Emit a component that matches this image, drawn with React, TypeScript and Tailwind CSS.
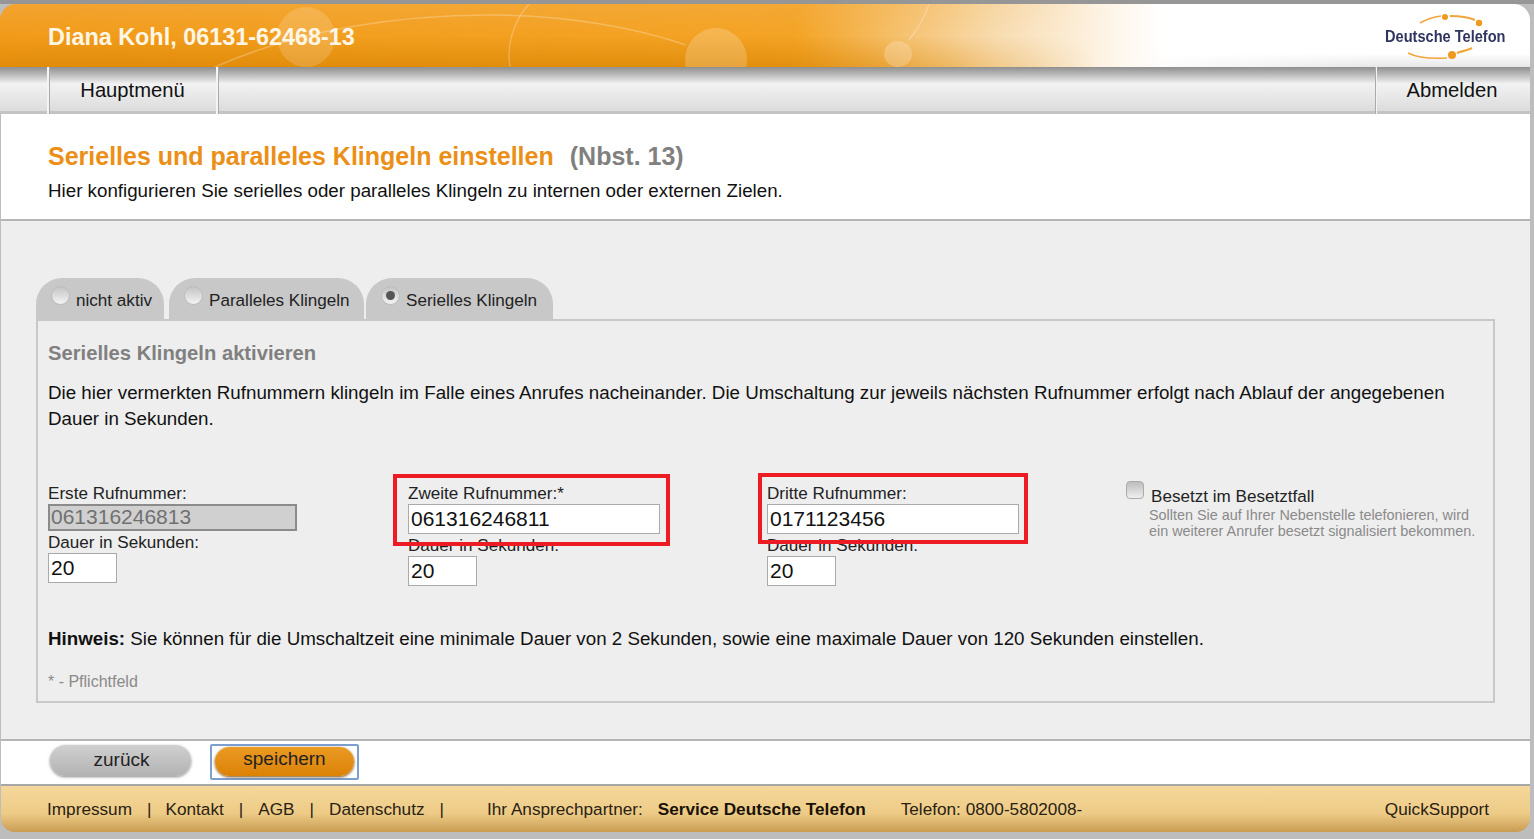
export default function App() {
  const Radio = ({ on }: { on?: boolean }) => (
    <span className="block w-[19px] h-[19px] rounded-full bg-gradient-to-b from-[#c4c4c4] to-[#f4f4f4] border border-[#bdbdbd] flex items-center justify-center shrink-0">
      {on && <span className="block w-[9px] h-[9px] rounded-full bg-[#555]" />}
    </span>
  );
  const Tab = ({ label, on, w, ml }: { label: string; on?: boolean; w: string; ml: string }) => (
    <div className={`${w} ${ml} h-[42px] bg-[#c8c8c8] rounded-t-[26px] flex items-start pl-[15px] pt-[8px] text-[17.1px] text-[#222]`}>
      <Radio on={on} />
      <span className="ml-[6px] mt-[5px] leading-[20px] whitespace-nowrap">{label}</span>
    </div>
  );
  const Field = ({ label, value, dur, w, disabled }: { label: string; value: string; dur: string; w: string; disabled?: boolean }) => (
    <div className={`${w} shrink-0`}>
      <div className="text-[17.1px] leading-[20px] text-[#222]">{label}</div>
      <input
        readOnly
        value={value}
        className={
          disabled
            ? "block w-[249px] h-[27px] bg-[#d0d0d0] border-2 border-[#8b8b8b] px-[1px] pb-[2px] text-[21px] text-[#707070] outline-none"
            : "block w-[252px] h-[30px] bg-white border border-[#aaa] px-[2px] text-[21px] text-[#111] outline-none"
        }
      />
      <div className={`text-[17.1px] leading-[20px] text-[#222] ${dur}`}>Dauer in Sekunden:</div>
      <input readOnly value="20" className="block w-[69px] h-[30px] bg-white border border-[#aaa] px-[2px] text-[21px] text-[#111] outline-none" />
    </div>
  );
  const Sep = () => <span className="ml-[15px]">|</span>;
  return (
    <div className="w-[1534px] h-[839px] bg-[#bdbdbd] overflow-hidden relative text-[#111]" style={{ fontFamily: '"Liberation Sans", Arial, sans-serif' }}>
      <div className="h-[4px] bg-[#969696]" />
      {/* header */}
      <header className="h-[63px] w-[1530px] rounded-t-[16px] relative overflow-hidden bg-[linear-gradient(to_right,#f29b1a_0%,#f4a425_52%,#f8dcb0_65%,#fdf3e4_72%,#ffffff_76%)]">
        <div className="absolute inset-0 bg-gradient-to-b from-[#f3b150]/40 via-transparent to-[#d98503]/70 [mask-image:linear-gradient(to_right,black_50%,transparent_72%)]" />
        <div className="absolute right-0 bottom-0 w-[400px] h-[14px] bg-gradient-to-b from-transparent to-[#d8d8d8]/60 [mask-image:linear-gradient(to_right,transparent,black_60%)]" />
        <svg className="absolute inset-0" width="1530" height="63" viewBox="0 0 1530 63" fill="none">
          <ellipse cx="306" cy="33" rx="29" ry="30" fill="#fff" fillOpacity="0.16" />
          <ellipse cx="716" cy="56" rx="31" ry="32" fill="#fff" fillOpacity="0.2" />
          <ellipse cx="898" cy="50" rx="14" ry="13" fill="#fff" fillOpacity="0.22" />
          <path d="M215 63 C300 25 400 11 490 11 C570 11 640 25 686 41" stroke="#fff" strokeOpacity="0.25" strokeWidth="1.5" />
          <path d="M510 63 C506 40 515 15 529 0" stroke="#fff" strokeOpacity="0.28" strokeWidth="1.2" />
          <path d="M909 36 C918 25 925 12 929 0" stroke="#fff" strokeOpacity="0.28" strokeWidth="1.2" />
          <path d="M1420 19 C1427 15 1434 13 1441 12" stroke="#f0a63a" strokeWidth="1.5" />
          <path d="M1450 12 C1460 12 1468 13 1475 16" stroke="#f0a63a" strokeWidth="2" />
          <circle cx="1445" cy="13" r="3" fill="#ef9a1e" />
          <circle cx="1479" cy="19" r="3.2" fill="#ef9a1e" />
          <path d="M1408 49 C1418 54 1432 55 1447 54" stroke="#f0a63a" strokeWidth="1.5" />
          <circle cx="1452" cy="51" r="4" fill="#ef9a1e" />
          <path d="M1457 49 C1463 47 1468 46 1472 44" stroke="#f0a63a" strokeWidth="2.2" />
        </svg>
        <div className="absolute left-[48px] top-[20px] text-[23.4px] leading-[26px] font-bold text-[#fff6e6]">Diana Kohl, 06131-62468-13</div>
        <div className="absolute left-[1385px] top-[24px] text-[17px] leading-[18px] font-bold text-[#2f3460] scale-x-[0.858] origin-left whitespace-nowrap">Deutsche Telefon</div>
      </header>
      {/* nav */}
      <nav className="h-[47px] w-[1530px] flex bg-gradient-to-b from-[#8f8f8f] via-[#f2f2f2] via-[38%] to-[#dcdcdc] border-b-[3px] border-[#c4c4c4] text-[20.2px]">
        <div className="w-[47px]" />
        <div className="w-[171px] h-[47px] border-x-2 border-x-[#f4f4f4] shadow-[inset_1px_0_0_#aaa,1px_0_0_#aaa] flex items-center justify-center">Hauptmenü</div>
        <div className="flex-1" />
        <div className="w-[153px] mr-[1px] h-[47px] border-l border-l-[#f4f4f4] shadow-[-1px_0_0_#aaa] flex items-center justify-center pr-[2px]">Abmelden</div>
      </nav>
      {/* title */}
      <section className="h-[107px] w-[1529px] ml-[1px] bg-white border-b-2 border-[#b5b5b5] pl-[47px] pt-[27px]">
        <h1 className="text-[25px] leading-[30px] font-bold text-[#ec8f17]">
          Serielles und paralleles Klingeln einstellen<span className="text-[#808080] ml-[16px]">(Nbst. 13)</span>
        </h1>
        <p className="mt-[8px] text-[18.75px] leading-[24px] text-[#111]">Hier konfigurieren Sie serielles oder paralleles Klingeln zu internen oder externen Zielen.</p>
      </section>
      {/* main */}
      <main className="h-[520px] w-[1529px] ml-[1px] bg-[#eeeeee] pl-[35px] pt-[57px] border-b-2 border-[#b5b5b5]">
        <div className="flex">
          <Tab label="nicht aktiv" w="w-[128px]" ml="" />
          <Tab label="Paralleles Klingeln" w="w-[195px]" ml="ml-[5px]" />
          <Tab label="Serielles Klingeln" on w="w-[187px]" ml="ml-[2px]" />
        </div>
        <div className="w-[1459px] h-[384px] -mt-[1px] border-2 border-[#c8c8c8] pl-[10px] pt-[19px] relative">
          <h2 className="text-[20.2px] leading-[26px] font-bold text-[#808080]">Serielles Klingeln aktivieren</h2>
          <p className="mt-[14px] text-[18.75px] leading-[26px] w-[1420px] text-[#111]">Die hier vermerkten Rufnummern klingeln im Falle eines Anrufes nacheinander. Die Umschaltung zur jeweils nächsten Rufnummer erfolgt nach Ablauf der angegebenen Dauer in Sekunden.</p>
          <div className="flex mt-[52px] h-[115px]">
            <Field label="Erste Rufnummer:" value="061316246813" w="w-[360px]" dur="mt-[2px]" disabled />
            <Field label="Zweite Rufnummer:*" value="061316246811" w="w-[359px]" dur="mt-[2px]" />
            <Field label="Dritte Rufnummer:" value="0171123456" w="w-[359px]" dur="mt-[2px]" />
            <div className="flex -mt-[3px] items-start">
              <span className="block w-[18px] h-[18px] rounded-[4px] border border-[#aaa] bg-gradient-to-b from-[#bdbdbd] to-[#efefef] shrink-0" />
              <div className="ml-[7px] mt-[6px]">
                <div className="text-[17.1px] leading-[20px] text-[#222]">Besetzt im Besetztfall</div>
                <div className="text-[14.4px] leading-[16px] text-[#8a8a8a] whitespace-nowrap -ml-[2px]">Sollten Sie auf Ihrer Nebenstelle telefonieren, wird<br />ein weiterer Anrufer besetzt signalisiert bekommen.</div>
              </div>
            </div>
          </div>
          <p className="mt-[28px] text-[18.75px] leading-[24px] text-[#111]"><b>Hinweis:</b> Sie können für die Umschaltzeit eine minimale Dauer von 2 Sekunden, sowie eine maximale Dauer von 120 Sekunden einstellen.</p>
          <p className="mt-[21px] text-[16px] leading-[20px] text-[#8a8a8a]">* - Pflichtfeld</p>
          {/* red annotation boxes */}
          <div className="absolute left-[355px] top-[153px] w-[277px] h-[72px] border-[4px] border-[#ed1c24] pointer-events-none" />
          <div className="absolute left-[720px] top-[152px] w-[270px] h-[71px] border-[4px] border-[#ed1c24] pointer-events-none" />
        </div>
      </main>
      {/* actions */}
      <section className="h-[45px] w-[1529px] ml-[1px] bg-white border-b-2 border-[#a8a8a8] flex items-start pl-[49px] pt-[4px] text-[19px] text-[#222]">
        <button className="w-[141px] h-[31px] pl-[2px] rounded-full bg-gradient-to-b from-[#d0d0d0] to-[#b2b2b2] shadow-[0_1px_3px_#888]">zurück</button>
        <div className="ml-[19px] -mt-[1px] w-[149px] h-[36px] border-2 border-[#7d9fd0] rounded-[2px] flex items-center justify-center pb-[1px]">
          <button className="w-[139px] h-[29px] rounded-full bg-gradient-to-b from-[#ea9a22] to-[#dc8204] shadow-[0_1px_3px_#7a4a10] leading-[22px] pb-[5px]">speichern</button>
        </div>
      </section>
      {/* footer */}
      <footer className="h-[46px] w-[1529px] ml-[1px] rounded-b-[14px] bg-gradient-to-b from-[#f6d89c] via-[#edcb86] via-[60%] to-[#c99c52] flex items-center pl-[46px] pt-[2px] text-[17.2px] text-[#2a2113] whitespace-nowrap">
        <span>Impressum</span><Sep />
        <span className="ml-[14px]">Kontakt</span><Sep />
        <span className="ml-[15px]">AGB</span><Sep />
        <span className="ml-[15px]">Datenschutz</span><Sep />
        <span className="ml-[43px]">Ihr Ansprechpartner:</span>
        <b className="ml-[15px] text-[#1a1208]">Service Deutsche Telefon</b>
        <span className="ml-[35px]">Telefon: 0800-5802008-</span>
        <span className="ml-auto mr-[41px]">QuickSupport</span>
      </footer>
    </div>
  );
}
